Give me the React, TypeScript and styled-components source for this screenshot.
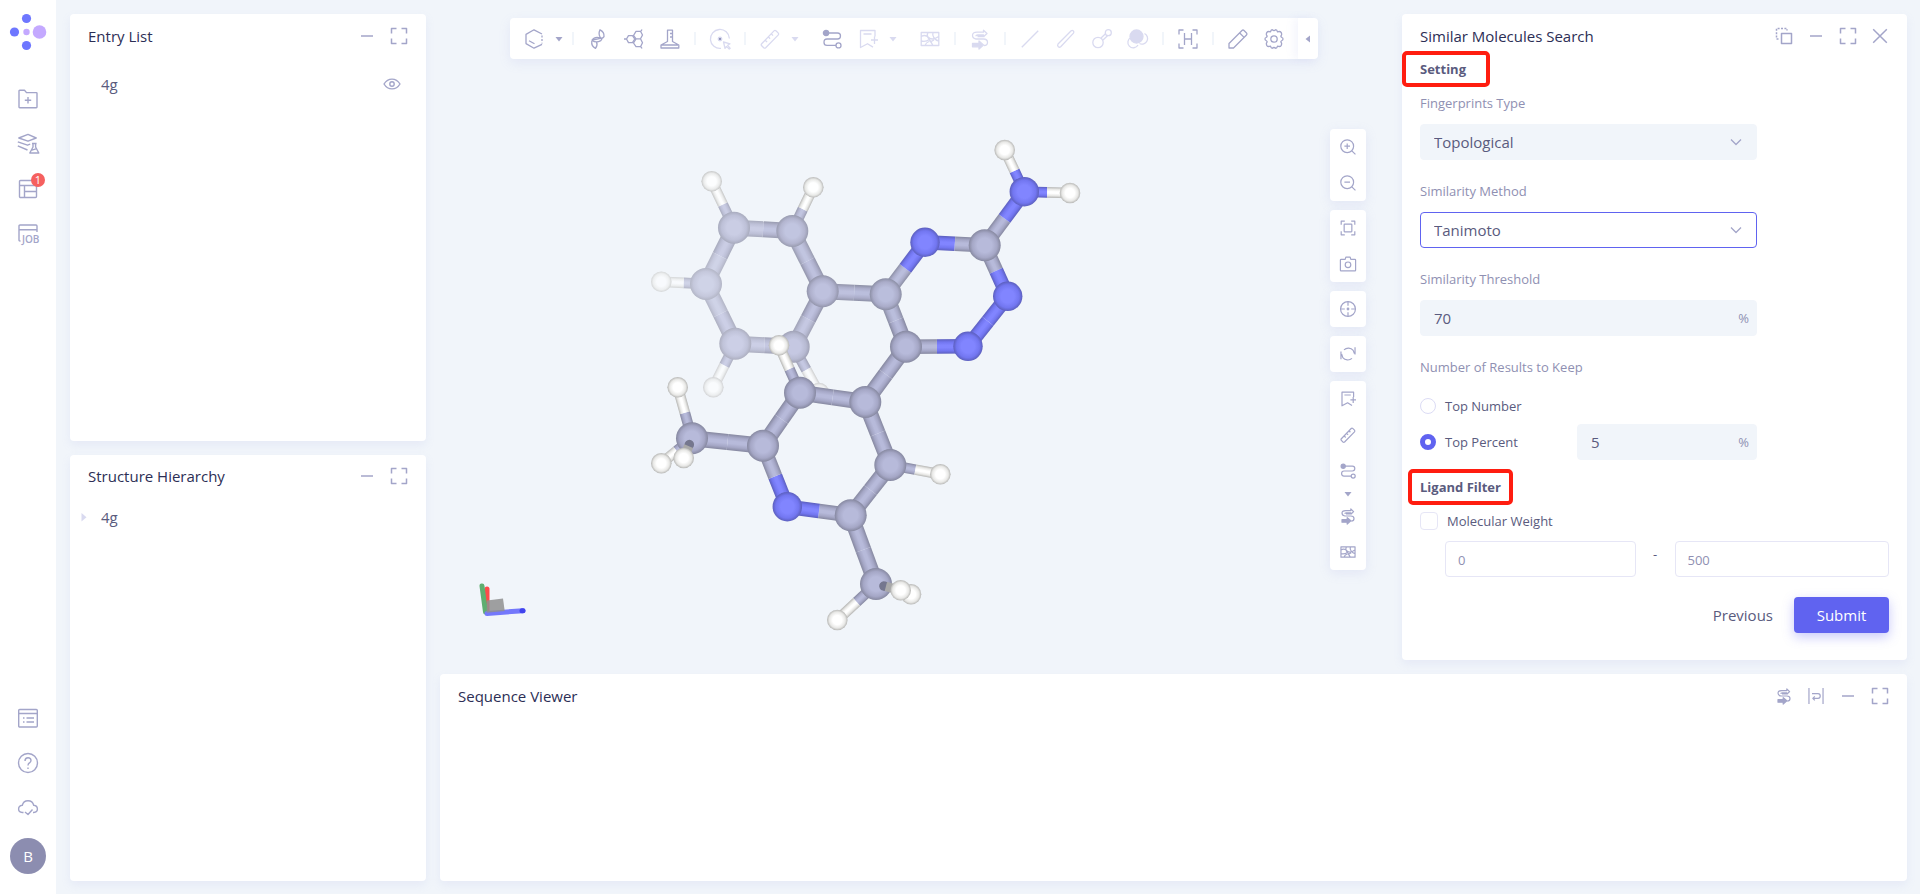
import React from "react";
import styled, { createGlobalStyle, css } from "styled-components";

const color = {
  page: "#f1f5fa",
  card: "#ffffff",
  title: "#2c2e55",
  text: "#5a5b7e",
  label: "#8f90b2",
  icon: "#a3a5c9",
  iconOff: "#d9daf0",
  line: "#e6e6f6",
  primary: "#6063f0",
  danger: "#f5605f",
  mark: "#ff1d10",
};

const GlobalStyle = createGlobalStyle`
  *, *::before, *::after { box-sizing: border-box; }
  body {
    margin: 0;
    background: ${color.page};
    color: ${color.text};
    font-family: "Open Sans", "Noto Sans", sans-serif;
    font-size: 15px;
    line-height: 20px;
  }
  button, input, select { font: inherit; color: inherit; }
`;

/* ---------- layout ---------- */

const Page = styled.div`
  display: flex;
  min-height: 100vh;
`;

const Sidebar = styled.nav`
  display: flex;
  flex-direction: column;
  align-items: center;
  width: 56px;
  flex: none;
  padding: 12px 0 20px;
  background: ${color.card};
`;

const Workspace = styled.main`
  display: flex;
  gap: 14px;
  flex: 1;
  min-width: 0;
  padding: 14px 13px 13px 14px;
`;

const LeftColumn = styled.div`
  display: flex;
  flex-direction: column;
  gap: 14px;
  width: 356px;
  flex: none;
`;

const RightColumn = styled.div`
  display: flex;
  flex-direction: column;
  gap: 14px;
  flex: 1;
  min-width: 0;
`;

const TopRow = styled.div`
  display: flex;
  gap: 14px;
  flex: 1;
`;

const Card = styled.section<{ $grow?: boolean; $width?: number; $height?: number }>`
  background: ${color.card};
  border-radius: 4px;
  box-shadow: 0 4px 10px rgba(150, 155, 225, 0.12);
  ${(p) => p.$grow && css`flex: 1;`}
  ${(p) => p.$width && css`flex: none; width: ${p.$width}px;`}
  ${(p) => p.$height && css`flex: none; min-height: ${p.$height}px;`}
`;

const CardHeader = styled.header`
  display: flex;
  align-items: center;
  height: 45px;
  padding: 0 11px 2px 18px;
`;

const CardTitle = styled.h2`
  flex: 1;
  margin: 0;
  color: ${color.title};
  font-size: 15px;
  font-weight: 500;
`;

const IconButton = styled.button<{ $w?: number; $h?: number }>`
  display: flex;
  align-items: center;
  justify-content: center;
  width: ${(p) => p.$w ?? 32}px;
  height: ${(p) => p.$h ?? 32}px;
  flex: none;
  padding: 0;
  border: 0;
  background: none;
  color: ${color.icon};
  cursor: pointer;
  position: relative;
  &:disabled {
    color: ${color.iconOff};
    cursor: default;
  }
`;

/* ---------- sidebar ---------- */

const Logo = styled.a`
  display: block;
  height: 64px;
`;

const Spacer = styled.div`
  flex: 1;
`;

const Badge = styled.span`
  position: absolute;
  top: 7px;
  right: 11px;
  width: 14px;
  height: 14px;
  border-radius: 50%;
  background: ${color.danger};
  color: #fff;
  font-size: 11px;
  line-height: 14px;
  text-align: center;
`;

const Avatar = styled.button`
  width: 36px;
  height: 36px;
  flex: none;
  margin-top: 8px;
  padding: 0;
  border: 0;
  border-radius: 50%;
  background: #8c8db0;
  color: #fff;
  font-size: 15px;
`;

/* ---------- lists ---------- */

const List = styled.ul<{ $top?: number }>`
  margin: 0;
  padding: ${(p) => p.$top ?? 0}px 18px 0 8px;
  list-style: none;
`;

const ListRow = styled.li`
  display: flex;
  align-items: center;
  height: 34px;
`;

const Twisty = styled.span`
  display: flex;
  width: 23px;
  color: ${color.iconOff};
`;

const ListName = styled.span`
  flex: 1;
`;

/* ---------- viewer ---------- */

const Viewer = styled.section`
  display: grid;
  grid-template: 1fr / 1fr;
  flex: 1;
  min-width: 0;
  > * { grid-area: 1 / 1; }
`;

const Scene = styled.svg`
  display: block;
  width: 100%;
  height: 100%;
`;

const Toolbar = styled.div`
  display: flex;
  align-items: center;
  align-self: start;
  justify-self: center;
  height: 41px;
  margin-top: 4px;
  padding-left: 6px;
  border-radius: 4px;
  background: ${color.card};
  box-shadow: 0 4px 12px rgba(150, 155, 225, 0.14);
`;

const Divider = styled.span`
  width: 14px;
  height: 13px;
  background: linear-gradient(${color.page}, ${color.page}) center / 2px 100% no-repeat;
`;

const Gap = styled.span`
  width: 12px;
`;

const Collapse = styled(IconButton)`
  height: 41px;
  margin-left: 6px;
  box-shadow: -4px 0 8px rgba(150, 155, 225, 0.1);
  border-radius: 0 4px 4px 0;
`;

const SideTools = styled.div`
  display: flex;
  flex-direction: column;
  gap: 9px;
  align-self: start;
  justify-self: end;
  margin: 115px 22px 0 0;
`;

const ToolGroup = styled.div`
  width: 36px;
  border-radius: 4px;
  background: ${color.card};
  box-shadow: 0 3px 12px rgba(150, 155, 225, 0.16);
`;

/* ---------- search form ---------- */

const Form = styled.form`
  padding: 0 18px 27px;
  font-size: 13px;
`;

const Heading = styled.h3<{ $top?: number }>`
  margin: ${(p) => p.$top ?? 0}px 0 14px;
  font-size: 13px;
  font-weight: 700;
  line-height: 20px;
`;

const Marked = styled.span<{ $left: number; $right: number }>`
  position: relative;
  &::after {
    content: "";
    position: absolute;
    inset: -9px ${(p) => -p.$right}px -9px ${(p) => -p.$left}px;
    border: 4px solid ${color.mark};
    border-radius: 5px;
  }
`;

const Field = styled.div`
  width: 337px;
  margin-bottom: 21px;
`;

const Label = styled.label`
  display: block;
  margin-bottom: 11px;
  color: ${color.label};
`;

const Fieldset = styled.fieldset`
  width: 337px;
  margin: 0;
  padding: 0;
  border: 0;
`;

const Legend = styled.legend`
  padding: 0;
  margin-bottom: 11px;
  color: ${color.label};
`;

const Control = styled.div<{ $width?: number }>`
  display: grid;
  grid-template: 36px / 1fr;
  align-items: center;
  width: ${(p) => (p.$width ? `${p.$width}px` : "100%")};
  > * { grid-area: 1 / 1; }
`;

const Adornment = styled.span<{ $right: number; $icon?: boolean }>`
  display: flex;
  justify-self: end;
  margin-right: ${(p) => p.$right}px;
  color: ${(p) => (p.$icon ? color.icon : color.label)};
  pointer-events: none;
`;

const boxStyle = css`
  width: 100%;
  min-width: 0;
  height: 36px;
  padding: 0 13px;
  border: 1px solid ${color.page};
  border-radius: 4px;
  outline: 0;
  background: ${color.page};
  font-size: 15px;
`;

const Select = styled.select<{ $active?: boolean }>`
  ${boxStyle}
  appearance: none;
  ${(p) => p.$active && css`border-color: ${color.primary}; background: ${color.card};`}
`;

const Input = styled.input<{ $plain?: boolean; $basis?: number }>`
  ${boxStyle}
  ${(p) =>
    p.$plain &&
    css`
      flex: 1 1 ${p.$basis}px;
      padding: 2px 12px 0;
      border-color: ${color.line};
      background: ${color.card};
      color: ${color.label};
      font-size: 13px;
    `}
`;

const ChoiceRow = styled.div`
  display: flex;
  align-items: center;
  justify-content: space-between;
  height: 36px;
`;

const Choice = styled.label<{ $gap: number }>`
  display: flex;
  align-items: center;
  gap: ${(p) => p.$gap}px;
`;

const Radio = styled.input`
  appearance: none;
  width: 16px;
  height: 16px;
  margin: 0;
  border: 1px solid #dcdcf5;
  border-radius: 50%;
  &:checked { border: 5px solid ${color.primary}; }
`;

const Checkbox = styled.input`
  appearance: none;
  width: 18px;
  height: 18px;
  margin: 0;
  border: 1px solid ${color.line};
  border-radius: 4px;
`;

const Range = styled.div`
  display: flex;
  margin: 10px 0 20px;
  padding-left: 25px;
`;

const Dash = styled.span`
  width: 39px;
  flex: none;
  line-height: 26px;
  text-align: center;
`;

const Actions = styled.div`
  display: flex;
  justify-content: flex-end;
  gap: 7px;
`;

const Button = styled.button<{ $primary?: boolean }>`
  height: 36px;
  padding: 0 14px;
  border: 0;
  border-radius: 4px;
  background: none;
  font-size: 15px;
  ${(p) =>
    p.$primary &&
    css`
      width: 95px;
      background: ${color.primary};
      color: #fff;
      box-shadow: 0 4px 12px rgba(96, 99, 240, 0.35);
    `}
`;

/* ---------- icons ---------- */

const shapes: Record<string, React.ReactNode> = {
  minus: <path d="M4 10h12" />,
  full: <path d="M2.500 7.500v-5h5M12.500 2.500h5v5M17.500 12.500v5h-5M7.500 17.500h-5v-5" />,
  close: <path d="M3.200 3.200l13.600 13.600M16.800 3.200L3.200 16.800" />,
  copy: (
    <>
      <path d="M7.500 7.500h10v10h-10z" />
      <path d="M4.500 13h-2V2.500H13v2" strokeDasharray="2 1.400" />
    </>
  ),
  eye: (
    <>
      <path d="M2 10c2-3.200 4.800-4.900 8-4.900s6 1.700 8 4.900c-2 3.200-4.800 4.900-8 4.900S4 13.200 2 10z" />
      <circle cx="10" cy="10" r="2.200" />
    </>
  ),
  chevron: <path d="M5 7.500l5 5 5-5" />,
  down: <path d="M6.500 8h7L10 12.600z" fill="currentColor" stroke="none" />,
  left: <path d="M12 6.500v7L7.500 10z" fill="currentColor" stroke="none" />,
  right: <path d="M3.500 6v8.500L8.500 10.200z" fill="currentColor" stroke="none" />,
  folder: (
    <>
      <path d="M1 18.300V2q0-.7.7-.7h4.800l2 2.300h9.800q.700 0 .700.700V18q0 .700-.700.700H1.700q-.700 0-.700-.700z" />
      <path d="M10 8v6.500M6.800 11.200h6.400" />
    </>
  ),
  layers: (
    <>
      <path d="M.8 4L10 .400 18.200 4 10 7.200z" />
      <path d="M-.200 7.800l9.700 3.400 2.700-1M-.200 11.800L9.500 16" />
      <path d="M15 9.500v3.500l-3.200 6h9l-3.200-6V9.500zM14 9.500h4.600M13.800 16.200l5-1.500" />
    </>
  ),
  layout: (
    <>
      <rect x="1.500" y="1.500" width="17" height="17" rx="1" />
      <path d="M1.500 6.500h17M6.500 6.500v12M6.500 12.500h12" />
    </>
  ),
  job: (
    <>
      <path d="M2.500 17H2q-1 0-1-1V2q0-1 1-1h16q1 0 1 1v6M1 5.800h18" />
      <text x="4" y="18.500" fontSize="10" fontWeight="600" fill="currentColor" stroke="none">JOB</text>
    </>
  ),
  list: (
    <>
      <rect x=".7" y="1.500" width="18.600" height="17.500" rx="1" />
      <path d="M.7 5.500h18.600M5 10h1.500M8.500 10h7.500M5 14h1.500M8.500 14h7.500" />
    </>
  ),
  help: (
    <>
      <circle cx="10" cy="10" r="9.500" />
      <path d="M7 8q0-3.200 3-3.200T13 7.600q0 1.400-1.500 2.200T10 12.500M10 14.500v1.500" />
    </>
  ),
  cloud: <path d="M5.500 14.500H4.300Q.600 14.200.600 11t3.700-3.700Q5.300 2.700 10 2.700t5.700 4.600Q19.400 7.700 19.400 11t-3.700 3.500H15M7 14l3 2.500 4.500-5" />,
  benzene: (
    <>
      <path d="M18 5L10 .8 2 5.400v9.200l8 4.600 8-3.800M5 11.700l5.500 3" />
      <path d="M18 6.500v8" strokeDasharray="2 1.600" />
    </>
  ),
  dna: (
    <path d="M12 .800q4.500 2.200 4 6.800-.8 1.600-3.200 1.700-3-4-.8-8.500zM13 9.300q-6-2.500-9 1.900Q8 14.500 12.800 11.600L14.500 9M4.500 11.200l9-2M3.800 12q-.8 5 3.700 7.400 2.500-3.400 1-6.600" />
  ),
  rings: (
    <>
      <path d="M9.500 6.500L12 2.300h4.500l2 3.700-2 3.800H12zM9.500 14l2.500-4.200h4.500l2 4-2 3.900H12z" />
      <path d="M4.500 6.700h4L10.700 10l-2.200 3.600h-4L2.500 10zM2.500 10H0M17 2.200l1-1.700M17 17.800l1 1.700" />
    </>
  ),
  flask: <path d="M7.500 1.200h5v11.300l6.300 3.500v3H1v-3l6.500-3.500zM1.500 16H18M10 4.500h2.500M10 8h2.500" />,
  target: (
    <>
      <path d="M11 19.400A9.500 9.500 0 1 1 19.400 9.500" />
      <circle cx="10" cy="10" r="1.800" fill="#8f91b8" stroke="currentColor" />
      <path d="M13.500 13l6.500 1.800-2.300 1.500 2.500 3-1 .8-2.700-2.700-1.500 2z" />
    </>
  ),
  ruler: <path d="M1.700 14.700L14 1.900q1-1 2.200.1l1.900 1.900q1 1 0 2.200L5.700 18.700q-1 .8-2 0l-2-2q-1-1 0-2zM8.500 8l1.600 1.700M11.500 5l1.500 1.600M5.500 11.500l1.600 1.600" />,
  path: (
    <>
      <path d="M4 4h11.500q3 0 3 3t-3 3H5q-3 0-3 3.200t3 3.200h9" />
      <circle cx="4" cy="4" r="2.600" fill="currentColor" />
      <circle cx="16.500" cy="16.400" r="2.500" fill="#fff" />
    </>
  ),
  bookmark: <path d="M17 7.500V1.500H2.500v17l7-3.800 5.500 3.400M5.500 5h8M13 11h7M16.500 7.500v7.500" />,
  map: (
    <path d="M1.200 3.500h17.600v13H1.200zM1.200 7.500q4-2.500 7.500 1t10-1M1.200 12q5 1 8-1.500M8 3.500q-1.500 3 0 5t5 8M13 3.500q-1 3 1 5.500t4.800 3M5 16.500q1-3 4-4M14 11q-3 2-4.500 1.500" />
  ),
  swap: (
    <>
      <path d="M13.500 7.800L17 4.500l-3.500-3.300v2H7Q2.500 3.200 2.500 6.300T6 10h7.500q4 0 4 3.200T14 16.500M13.500 7.800V6H7.700Q6 6 6 7.200M14.500 7.500h-7" />
      <path d="M2.500 14.500h6.500V12l4.500 4-4.500 4v-2.200H2.500z" fill="currentColor" />
    </>
  ),
  line: <path d="M1.800 18.200L18.200 1.800" />,
  bond: <path d="M2 15L15.200 1.700q1-.8 2.200.2.900 1.100.1 2.200L4.700 17.800q-1.200.9-2.400 0-1.200-1.400-.3-2.800z" />,
  atoms: (
    <>
      <circle cx="6" cy="13.500" r="5.200" />
      <circle cx="16.300" cy="3.700" r="3" />
      <path d="M9 9l4.500-4.300M11 11l4.500-4.300" />
    </>
  ),
  overlap: (
    <>
      <path d="M3 8.500A5.400 5.400 0 1 0 10 16M16.500 4.500a5.400 5.400 0 1 1-5 10" />
      <circle cx="8.500" cy="7.500" r="6.500" fill="currentColor" />
    </>
  ),
  hydrogen: (
    <>
      <path d="M1 5.500V1h4.500M14.500 1H19v4.500M19 14.500V19h-4.500M5.500 19H1v-4.500" />
      <path d="M6.500 4v12M13.500 4v12M6.500 10h7" />
    </>
  ),
  pencil: <path d="M1 19v-4.500L14 1.500q1-1 2 0L18.500 4q1 1 0 2L5.500 19zM11.700 4l4.400 4.400" />,
  gear: (
    <>
      <path d="M6.500 2.800Q7 .700 8.300.700q1.700 1.500 3.400 0 1.300 0 1.800 2.100 2.700-.8 3.600.6.900 1.600.3 2.700-1.200 1.600.6 2.400 1 .300 1 1.500t-1 1.500q-1.800.8-.6 2.400.600 1.100-.3 2.700-.900 1.400-3.600.6-.5 2.100-1.800 2.100-1.700-1.500-3.400 0-1.300 0-1.800-2.100-2.700.8-3.600-.6-.900-1.600-.3-2.700 1.200-1.600-.6-2.400-1-.300-1-1.500t1-1.500q1.800-.8.600-2.400-.600-1.100.3-2.700.900-1.400 3.600-.6z" />
      <circle cx="10" cy="10" r="3.200" />
    </>
  ),
  zoomIn: (
    <>
      <circle cx="9" cy="9" r="8" />
      <path d="M14.800 14.800l4.500 4.500M5.500 9h7M9 5.500v7" />
    </>
  ),
  zoomOut: (
    <>
      <circle cx="9" cy="9" r="8" />
      <path d="M14.800 14.800l4.500 4.500M5.500 9h7" />
    </>
  ),
  fit: (
    <>
      <path d="M1.500 6V1.500H6M14 1.500h4.500V6M18.500 14v4.500H14M6 18.500H1.500V14" />
      <rect x="5.200" y="5.200" width="9.600" height="9.600" rx=".6" />
    </>
  ),
  camera: (
    <>
      <path d="M.500 5q0-.8.8-.8h5.200l.8-2.700h5.400l.8 2.700h5.200q.8 0 .8.800v12.700q0 .8-.8.800H1.300q-.8 0-.8-.8z" />
      <circle cx="10" cy="11" r="3.500" />
    </>
  ),
  cross: (
    <>
      <circle cx="10" cy="10" r="9.300" />
      <circle cx="10" cy="10" r="1" />
      <path d="M10 .700v5.300M10 14v5.300M.700 10h5.300M14 10h5.300" />
    </>
  ),
  refresh: <path d="M5 4.800A8 8 0 0 1 16.500 5.500M15 15.500A8 8 0 0 1 3.500 14.500M1.200 7v9.500M3.500 14.500L2 10M18.800 1.500v9M16.500 5.500l1.500 4" />,
  wrap: <path d="M1.200 0v20M18.800 0v20M5 7h7.500q2.800 0 2.800 3t-2.800 3H6M8.500 10.500L6 13l2.500 2.500" />,
};

const Icon = ({ name, size = 20, weight = 1.4 }: { name: string; size?: number; weight?: number }) => (
  <svg
    width={size}
    height={size}
    viewBox="0 0 20 20"
    fill="none"
    stroke="currentColor"
    strokeWidth={weight}
    strokeLinejoin="round"
    overflow="visible"
    aria-hidden="true"
  >
    {shapes[name]}
  </svg>
);

/* ---------- molecule ---------- */

type Element = "C" | "N" | "H";
type Atom = { el: Element; x: number; y: number; fog?: number };

const FOG = [241, 245, 250];
const palette: Record<Element, { mid: number[]; side: number[]; rim: number[]; r: number }> = {
  C: { mid: [183, 186, 218], side: [165, 167, 198], rim: [134, 136, 160], r: 16 },
  N: { mid: [129, 133, 255], side: [114, 118, 240], rim: [92, 95, 190], r: 14.700 },
  H: { mid: [255, 255, 255], side: [232, 232, 230], rim: [182, 182, 180], r: 10.300 },
};

const mix = (c: number[], fog = 0) =>
  `rgb(${c.map((v, i) => Math.round(v + (FOG[i] - v) * fog)).join(",")})`;

const atoms: Record<string, Atom> = {
  c1: { el: "C", x: 734, y: 227.700, fog: 0.32 },
  c2: { el: "C", x: 792.300, y: 231, fog: 0.18 },
  c3: { el: "C", x: 706, y: 284, fog: 0.42 },
  c4: { el: "C", x: 822.700, y: 291.300, fog: 0.12 },
  c5: { el: "C", x: 735.300, y: 343.700, fog: 0.36 },
  c6: { el: "C", x: 793.700, y: 346.700, fog: 0.24 },
  h1: { el: "H", x: 711.700, y: 181.300, fog: 0.25 },
  h2: { el: "H", x: 813.300, y: 187.300, fog: 0.05 },
  h3: { el: "H", x: 661.300, y: 281.700, fog: 0.5 },
  h5: { el: "H", x: 713.300, y: 387.300, fog: 0.45 },
  h6: { el: "H", x: 819, y: 393, fog: 0.4 },
  c7: { el: "C", x: 885.700, y: 294.300, fog: 0.06 },
  n8: { el: "N", x: 925, y: 242.300 },
  c9: { el: "C", x: 984.700, y: 245.300 },
  n10: { el: "N", x: 1007.700, y: 296.300 },
  n11: { el: "N", x: 968, y: 346.300 },
  c12: { el: "C", x: 906, y: 346.700 },
  n13: { el: "N", x: 1024.300, y: 191.700 },
  h13: { el: "H", x: 1004.700, y: 150 },
  h14: { el: "H", x: 1070, y: 193 },
  c14: { el: "C", x: 800, y: 392.700 },
  h15: { el: "H", x: 779, y: 345.300 },
  c15: { el: "C", x: 865.300, y: 402 },
  c16: { el: "C", x: 890.300, y: 465 },
  h16: { el: "H", x: 940.300, y: 474.300 },
  c17: { el: "C", x: 850.700, y: 515.300 },
  n18: { el: "N", x: 787.300, y: 506.700 },
  c19: { el: "C", x: 763, y: 445.700 },
  c20: { el: "C", x: 692, y: 438.300 },
  h20: { el: "H", x: 677.700, y: 387.300 },
  h21: { el: "H", x: 661.300, y: 463.300 },
  h22: { el: "H", x: 683.700, y: 458 },
  c21: { el: "C", x: 876, y: 584 },
  h23: { el: "H", x: 837.300, y: 620 },
  h24: { el: "H", x: 911, y: 594.300 },
  h25: { el: "H", x: 900.700, y: 590.300 },
};

/*
 * Painted back to front: "a-b" is a bond, "a>b" is a bond that points at the
 * viewer and shows only its shaded near end, any other entry is an atom.
 */
const paintOrder =
  "c1-c2 c1-c3 c2-c4 c3-c5 c5-c6 c6-c4 c1-h1 c2-h2 c3-h3 c5-h5 c6-h6 h1 h2 h3 h5 h6 c3 c5 c1 c2 c6 " +
  "c4-c7 c4 c7-n8 n8-c9 c9-n10 n10-n11 n11-c12 c12-c7 c9-n13 n13-h13 n13-h14 c12-c15 c7 n8 c9 n10 n11 c12 n13 h13 h14 " +
  "c14-h15 c14-c15 c15-c16 c16-c17 c17-n18 n18-c19 c19-c14 c19-c20 c16-h16 c17-c21 c20-h20 c20-h21 c21-h23 " +
  "h15 c14 c15 c16 h16 c17 n18 c19 h20 h21 c20 c20>h22 h22 h23 c21 h24 c21>h25 h25";

const Ball = ({ id }: { id: string }) => {
  const a = atoms[id];
  const p = palette[a.el];
  return (
    <>
      <radialGradient id={`ball-${id}`}>
        <stop offset="0" stopColor={mix(p.mid, a.fog)} />
        <stop offset=".45" stopColor={mix(p.mid, a.fog)} />
        <stop offset=".78" stopColor={mix(p.side, a.fog)} />
        <stop offset="1" stopColor={mix(p.rim, a.fog)} />
      </radialGradient>
      <circle cx={a.x} cy={a.y} r={p.r} fill={`url(#ball-${id})`} />
    </>
  );
};

const Stick = ({ from, to }: { from: string; to: string }) => {
  const a = atoms[from];
  const b = atoms[to];
  const length = Math.hypot(b.x - a.x, b.y - a.y);
  const angle = (Math.atan2(b.y - a.y, b.x - a.x) * 180) / Math.PI;
  const els = a.el + b.el;
  const width = els.includes("H") ? 10.600 : els.includes("N") ? 14.500 : 16;
  return (
    <g transform={`translate(${a.x} ${a.y}) rotate(${angle})`}>
      {[a, b].map((end, i) => {
        const p = palette[end.el];
        const fog = end.fog ?? 0;
        const id = `stick-${from}-${to}-${i}`;
        return (
          <React.Fragment key={id}>
            <linearGradient id={id} x1="0" y1="0" x2="0" y2="1">
              <stop offset="0" stopColor={mix(p.rim, fog)} />
              <stop offset=".2" stopColor={mix(p.side, fog)} />
              <stop offset=".42" stopColor={mix(p.mid, fog)} />
              <stop offset=".58" stopColor={mix(p.mid, fog)} />
              <stop offset=".8" stopColor={mix(p.side, fog)} />
              <stop offset="1" stopColor={mix(p.rim, fog)} />
            </linearGradient>
            <rect x={(i * length) / 2} y={-width / 2} width={length / 2} height={width} fill={`url(#${id})`} />
          </React.Fragment>
        );
      })}
    </g>
  );
};

const NearStick = ({ from, to }: { from: string; to: string }) => {
  const a = atoms[from];
  const b = atoms[to];
  const at = (t: number) => `${a.x + (b.x - a.x) * t} ${a.y + (b.y - a.y) * t}`;
  return (
    <g fill="none" strokeWidth="9.500">
      <path d={`M${at(0.32)}L${at(0.34)}`} stroke="#75778e" strokeLinecap="round" />
      <path d={`M${at(0.4)}L${at(1)}`} stroke="#a9a9a9" />
    </g>
  );
};

const Molecule = () => (
  <Scene viewBox="440 14 948 646" role="img" aria-label="Molecule 4g">
    {paintOrder.split(" ").map((key) => {
      const [from, to] = key.split(/[->]/);
      if (!to) return <Ball key={key} id={from} />;
      return key.includes(">") ? <NearStick key={key} from={from} to={to} /> : <Stick key={key} from={from} to={to} />;
    })}
    <g strokeWidth="5" strokeLinecap="round">
      <path d="M487 612V589" stroke="#ff4a4a" />
      <path d="M485.500 612L482 586" stroke="#5fae70" />
      <path d="M487 613.500L523 610.700" stroke="#7478fb" />
      <path d="M522 610.800h1" stroke="#4144ee" />
    </g>
    <path d="M487 600.500l16-2 1.700 12.500-18.200 1.700z" fill="#8f8f8f" opacity=".85" />
  </Scene>
);

/* ---------- panels ---------- */

const smallIcons = ["swap", "wrap"];

const Header = ({ title, actions }: { title: string; actions: [string, string][] }) => (
  <CardHeader>
    <CardTitle>{title}</CardTitle>
    {actions.map(([icon, label]) => (
      <IconButton key={icon} type="button" aria-label={label}>
        <Icon name={icon} size={smallIcons.includes(icon) ? 16 : 20} weight={1.500} />
      </IconButton>
    ))}
  </CardHeader>
);

const minimise: [string, string] = ["minus", "Minimise"];
const expand: [string, string] = ["full", "Full screen"];

const tools: [string, string, boolean?][] = [
  ["benzene", "Draw"], ["down", "Draw options"], ["|", ""],
  ["dna", "Protein"], ["rings", "Ligand"], ["flask", "Experiment"], ["|", ""],
  ["target", "Select", true], ["|", ""],
  ["ruler", "Measure", true], ["down", "Measure options", true], [" ", ""],
  ["path", "Align"], ["bookmark", "Label", true], ["down", "Label options", true], [" ", ""],
  ["map", "Surface", true], ["|", ""],
  ["swap", "Sequence", true], ["|", ""],
  ["line", "Line", true], ["bond", "Stick", true], ["atoms", "Ball and stick", true], ["overlap", "Space filling", true], ["|", ""],
  ["hydrogen", "Hydrogens"], ["|", ""],
  ["pencil", "Edit"], ["gear", "Settings"],
];

const sideTools: [string, string][][] = [
  [["zoomIn", "Zoom in"], ["zoomOut", "Zoom out"]],
  [["fit", "Fit to view"], ["camera", "Screenshot"]],
  [["cross", "Centre"]],
  [["refresh", "Reset"]],
  [["bookmark", "Add label"], ["ruler", "Measure distance"], ["path", "Align structures"], ["down", "Align options"], ["swap", "Sequence"], ["map", "Surface"]],
];

const App = () => (
  <>
    <GlobalStyle />
    <Page>
      <Sidebar>
        <Logo href="#" aria-label="Home">
          <svg width="38" height="40" viewBox="0 0 38 40">
            <g fill="#6e77ff">
              <circle cx="17.500" cy="6.500" r="4.600" />
              <circle cx="5.500" cy="20" r="4.600" />
              <circle cx="17.500" cy="33.500" r="4.600" />
            </g>
            <g fill="#c4a9ff">
              <circle cx="17.500" cy="20" r="3.200" />
              <circle cx="30.500" cy="20" r="6.800" />
            </g>
          </svg>
        </Logo>
        <IconButton $w={56} $h={45} aria-label="New project"><Icon name="folder" /></IconButton>
        <IconButton $w={56} $h={45} aria-label="Library"><Icon name="layers" /></IconButton>
        <IconButton $w={56} $h={45} aria-label="Results">
          <Icon name="layout" />
          <Badge>1</Badge>
        </IconButton>
        <IconButton $w={56} $h={45} aria-label="Jobs"><Icon name="job" /></IconButton>
        <Spacer />
        <IconButton $w={56} $h={45} aria-label="Log"><Icon name="list" /></IconButton>
        <IconButton $w={56} $h={45} aria-label="Help"><Icon name="help" /></IconButton>
        <IconButton $w={56} $h={45} aria-label="Cloud"><Icon name="cloud" /></IconButton>
        <Avatar type="button">B</Avatar>
      </Sidebar>

      <Workspace>
        <LeftColumn>
          <Card $grow>
            <Header title="Entry List" actions={[minimise, expand]} />
            <List $top={8}>
              <ListRow>
                <Twisty />
                <ListName>4g</ListName>
                <IconButton aria-label="Show 4g"><Icon name="eye" /></IconButton>
              </ListRow>
            </List>
          </Card>
          <Card $grow>
            <Header title="Structure Hierarchy" actions={[minimise, expand]} />
            <List>
              <ListRow>
                <Twisty><Icon name="right" /></Twisty>
                <ListName>4g</ListName>
              </ListRow>
            </List>
          </Card>
        </LeftColumn>

        <RightColumn>
          <TopRow>
            <Viewer>
              <Molecule />
              <Toolbar role="toolbar" aria-label="Viewer tools">
                {tools.map(([icon, label, off], i) =>
                  icon === "|" ? (
                    <Divider key={i} />
                  ) : icon === " " ? (
                    <Gap key={i} />
                  ) : (
                    <IconButton key={i} $w={icon === "down" ? 14 : 36} $h={41} disabled={off} aria-label={label}>
                      <Icon name={icon} weight={1.300} />
                    </IconButton>
                  )
                )}
                <Collapse $w={20} aria-label="Collapse toolbar"><Icon name="left" /></Collapse>
              </Toolbar>
              <SideTools>
                {sideTools.map((group, i) => (
                  <ToolGroup key={i}>
                    {group.map(([icon, label]) => (
                      <IconButton key={icon} $w={36} $h={icon === "down" ? 9 : 36} aria-label={label}>
                        <Icon name={icon} size={icon === "down" ? 20 : 16} weight={1.500} />
                      </IconButton>
                    ))}
                  </ToolGroup>
                ))}
              </SideTools>
            </Viewer>

            <Card $width={505}>
              <Header
                title="Similar Molecules Search"
                actions={[["copy", "Pop out"], minimise, expand, ["close", "Close"]]}
              />
              <Form onSubmit={(e) => e.preventDefault()}>
                <Heading><Marked $left={18} $right={24}>Setting</Marked></Heading>
                <Field>
                  <Label htmlFor="fingerprint">Fingerprints Type</Label>
                  <Control>
                    <Select id="fingerprint"><option>Topological</option></Select>
                    <Adornment $right={11} $icon><Icon name="chevron" weight={1.300} /></Adornment>
                  </Control>
                </Field>
                <Field>
                  <Label htmlFor="method">Similarity Method</Label>
                  <Control>
                    <Select id="method" $active><option>Tanimoto</option></Select>
                    <Adornment $right={11} $icon><Icon name="chevron" weight={1.300} /></Adornment>
                  </Control>
                </Field>
                <Field>
                  <Label htmlFor="threshold">Similarity Threshold</Label>
                  <Control>
                    <Input id="threshold" defaultValue="70" />
                    <Adornment $right={8}>%</Adornment>
                  </Control>
                </Field>
                <Fieldset>
                  <Legend>Number of Results to Keep</Legend>
                  <ChoiceRow>
                    <Choice $gap={9}><Radio type="radio" name="keep" />Top Number</Choice>
                  </ChoiceRow>
                  <ChoiceRow>
                    <Choice $gap={9}><Radio type="radio" name="keep" defaultChecked />Top Percent</Choice>
                    <Control $width={180}>
                      <Input defaultValue="5" aria-label="Percent of results" />
                      <Adornment $right={8}>%</Adornment>
                    </Control>
                  </ChoiceRow>
                </Fieldset>
                <Heading $top={17}><Marked $left={12} $right={12}>Ligand Filter</Marked></Heading>
                <Choice $gap={9}><Checkbox type="checkbox" />Molecular Weight</Choice>
                <Range>
                  <Input $plain $basis={190} defaultValue="0" aria-label="Minimum molecular weight" />
                  <Dash>-</Dash>
                  <Input $plain $basis={214} defaultValue="500" aria-label="Maximum molecular weight" />
                </Range>
                <Actions>
                  <Button type="button">Previous</Button>
                  <Button type="submit" $primary>Submit</Button>
                </Actions>
              </Form>
            </Card>
          </TopRow>

          <Card $height={207}>
            <Header
              title="Sequence Viewer"
              actions={[["swap", "Align sequences"], ["wrap", "Wrap lines"], minimise, expand]}
            />
          </Card>
        </RightColumn>
      </Workspace>
    </Page>
  </>
);

export default App;
